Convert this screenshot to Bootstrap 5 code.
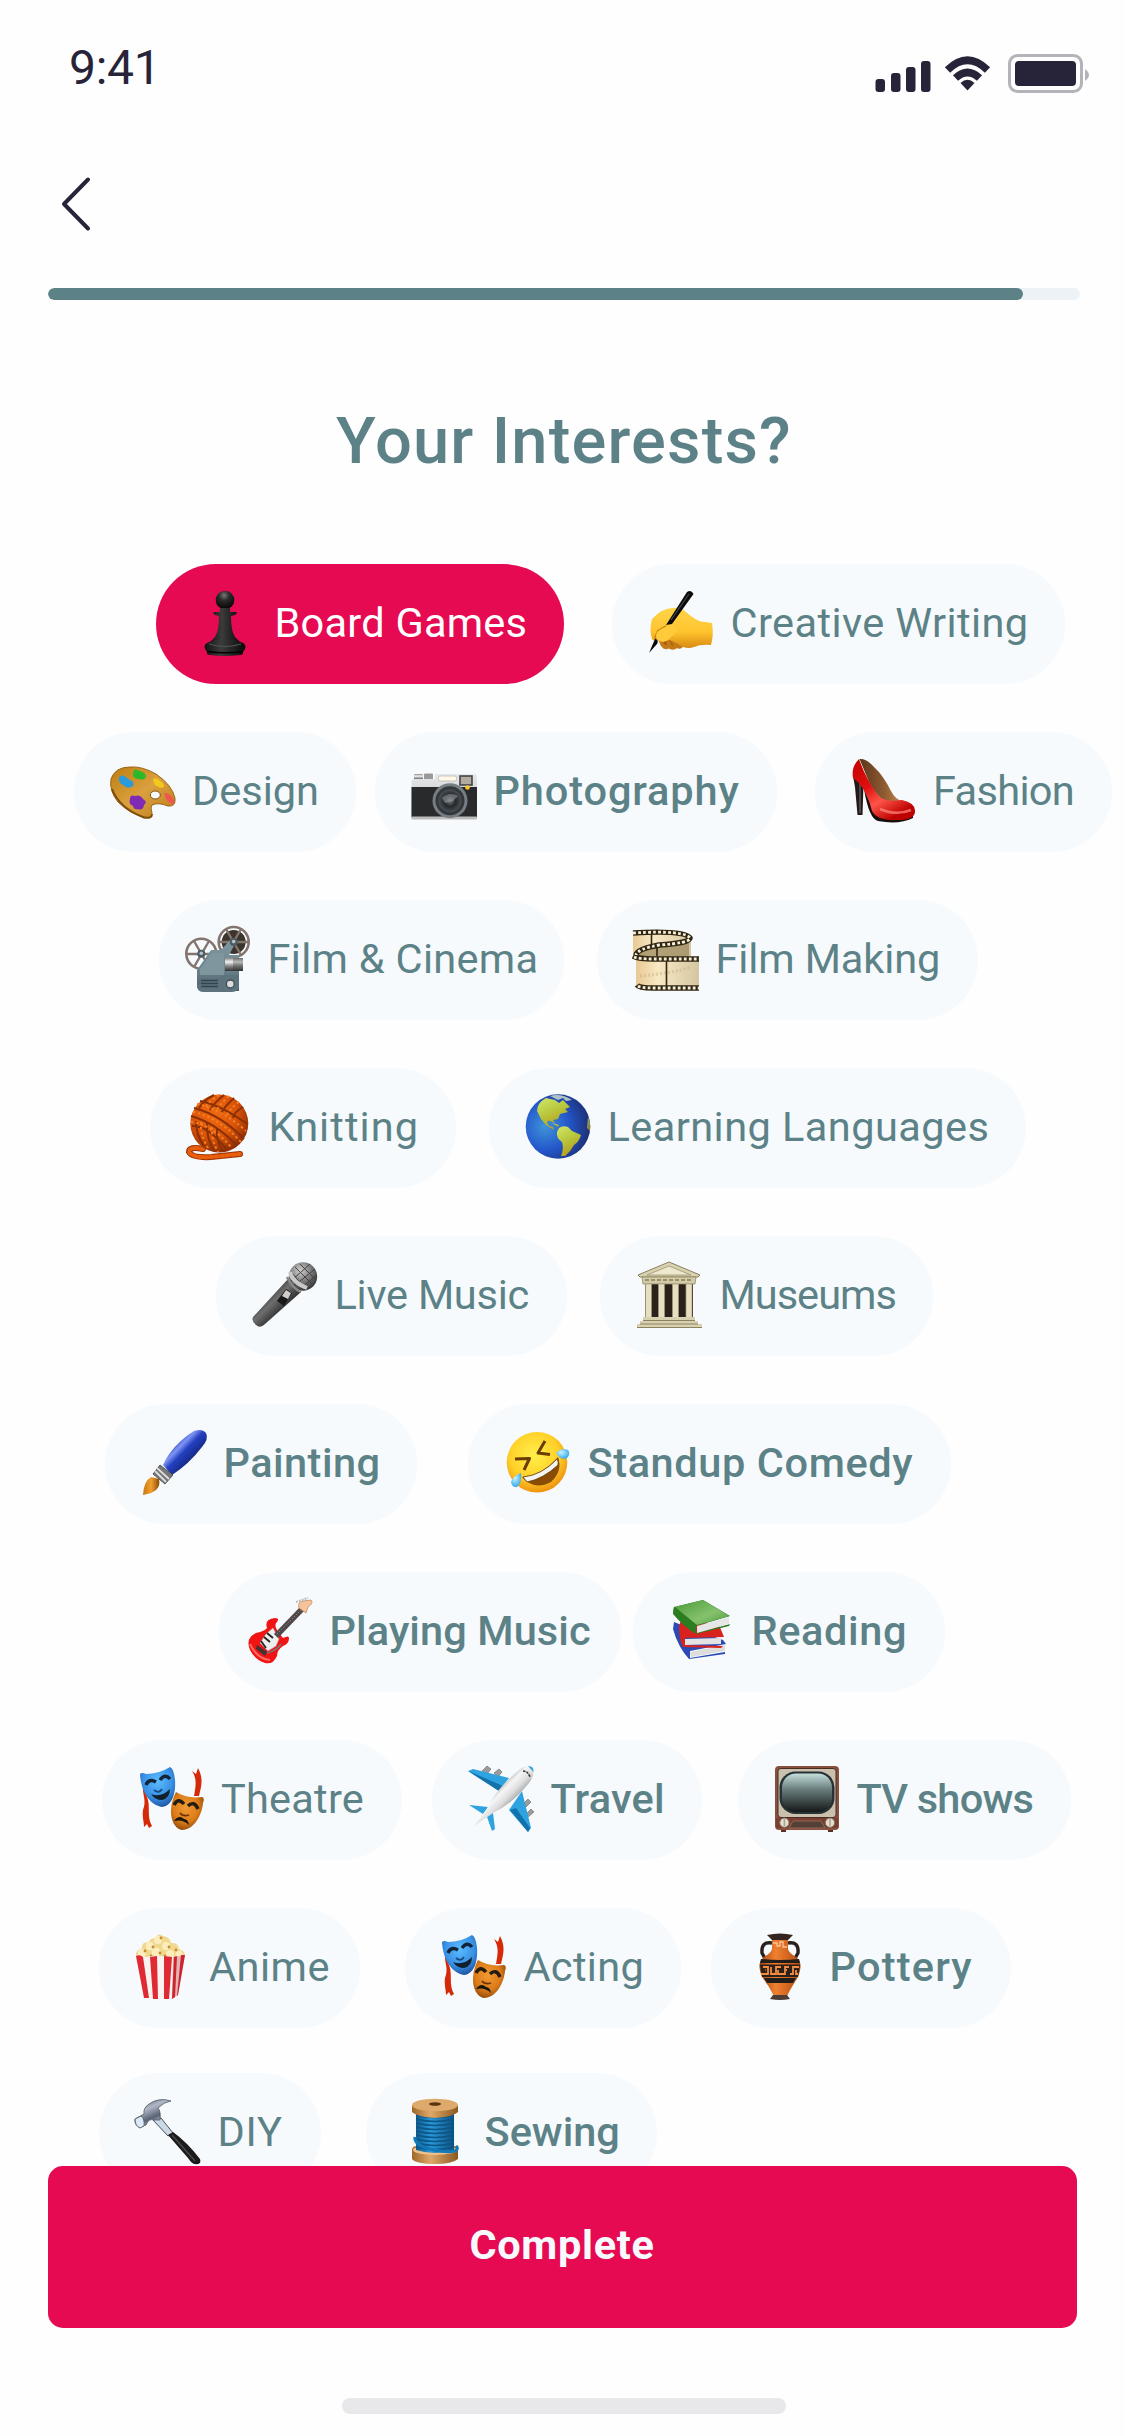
<!DOCTYPE html>
<html lang="en">
<head>
<meta charset="utf-8">
<meta name="viewport" content="width=device-width, initial-scale=1">
<title>Your Interests</title>
<link href="https://cdn.jsdelivr.net/npm/bootstrap@5.3.0/dist/css/bootstrap.min.css" rel="stylesheet">
<style>
:root{--teal:#5c8287;--pink:#e60a52;--ink:#272439;--mist:#f6fafd}
body{font-family:Roboto,"Liberation Sans",sans-serif;color:var(--teal);background:#fefefe}
.screen{width:1125px;height:2436px}
.status{height:132px;padding:42px 35px 0 69px;color:var(--ink)}
.clock{font-size:48px;line-height:52px;letter-spacing:-.3px}
.status-icons{margin-top:8px}
.topbar{height:156px;padding:43px 0 0 59px}
.steps{height:12px;margin:0 45px 0 48px;border-radius:6px;background:#ecf2f6}
.steps .progress-bar{background:var(--teal);border-radius:6px}
.heading{font-size:65px;line-height:78px;font-weight:500;letter-spacing:1.17px;margin:102px 0 84px;padding-left:3px}
.interests{height:1602px;overflow:hidden}
.chip-row{height:120px;margin-bottom:48px}
.chip-row:nth-child(9){margin-bottom:45px}
.chip{height:120px;width:var(--w);margin-left:var(--m);padding:0 0 0 var(--p,36px);border:0;border-radius:60px;background:var(--mist);color:var(--teal);font-size:41.5px;line-height:50px;letter-spacing:var(--s,0);white-space:nowrap;flex:none}
.chip svg{width:66px;height:66px;flex:none;overflow:visible;margin-right:16.5px}
.chip span{padding-bottom:3px}
.chip.picked{background:var(--pink);color:#fff}
.chip.medium{font-weight:500}
.chip-board{--w:408px;--m:156px;--s:.24px}
.chip-writing{--w:453px;--m:48px;--s:.41px}
.chip-design{--w:282px;--m:73.5px}
.chip-photo{--w:402px;--m:19.5px;--s:.88px}
.chip-fashion{--w:297px;--m:37.5px;--s:-.68px}
.chip-cinema{--w:405px;--m:159px;--p:26px;--s:.31px}
.chip-film{--w:381px;--m:33px;--s:-.12px}
.chip-knit{--w:306px;--m:150px;--s:1.06px}
.chip-lang{--w:537px;--m:33px;--s:.44px}
.chip-live{--w:351px;--m:216px;--s:-.24px}
.chip-museum{--w:333px;--m:33px;--p:37px;--s:-.97px}
.chip-paint{--w:312px;--m:105px;--s:.45px}
.chip-comedy{--w:483px;--m:51px;--p:37px;--s:.6px}
.chip-guitar{--w:402px;--m:219px;--p:28px;--s:.1px}
.chip-read{--w:312px;--m:12px;--s:.6px}
.chip-theatre{--w:300px;--m:102px;--p:36.5px;--s:.22px}
.chip-travel{--w:270px;--m:30px;--s:.2px}
.chip-tv{--w:333px;--m:36px;--s:-.8px}
.chip-anime{--w:261px;--m:99px;--p:27.5px;--s:.5px}
.chip-acting{--w:276px;--m:45px;--s:.3px}
.chip-pottery{--w:300px;--m:30px;--s:1.2px}
.chip-diy{--w:222px;--m:99px;--s:.8px}
.chip-sewing{--w:291px;--m:45px}
.complete{height:162px;margin:0 48px;border:0;border-radius:15px;background:var(--pink);color:var(--mist);font-size:41.5px;font-weight:700;letter-spacing:.67px;padding:0 1px 3px 0}
.home-bar{width:444px;height:16px;border-radius:8px;background:#e8e8ea;margin:70px auto 0 342px}
</style>
</head>
<body>
<svg width="0" height="0" class="position-absolute" aria-hidden="true">
<defs>
<linearGradient id="gBlack"><stop offset="0" stop-color="#111"/><stop offset=".4" stop-color="#3c3c3c"/><stop offset="1" stop-color="#080808"/></linearGradient>
<radialGradient id="gBall" cx=".45" cy=".25" r=".7"><stop offset="0" stop-color="#777"/><stop offset=".4" stop-color="#2b2b2b"/><stop offset="1" stop-color="#080808"/></radialGradient>
<linearGradient id="gHand" x2="0" y2="1"><stop offset="0" stop-color="#ffd348"/><stop offset=".6" stop-color="#ffc42e"/><stop offset="1" stop-color="#d98a12"/></linearGradient>
<linearGradient id="gWood" x2="1" y2="1"><stop offset="0" stop-color="#bd7d10"/><stop offset=".5" stop-color="#dba13f"/><stop offset="1" stop-color="#bd7c1b"/></linearGradient>
<linearGradient id="gSilver" x2="0" y2="1"><stop offset="0" stop-color="#e6e8ea"/><stop offset="1" stop-color="#b9bcbf"/></linearGradient>
<radialGradient id="gLens"><stop offset="0" stop-color="#777c80"/><stop offset=".5" stop-color="#25282b"/><stop offset="1" stop-color="#4a5056"/></radialGradient>
<linearGradient id="gRed" x2=".6" y2="1"><stop offset="0" stop-color="#c30000"/><stop offset=".45" stop-color="#e01010"/><stop offset=".7" stop-color="#ff5448"/><stop offset="1" stop-color="#bd0000"/></linearGradient>
<linearGradient id="gInner"><stop offset="0" stop-color="#5c361b"/><stop offset=".6" stop-color="#8f5c32"/><stop offset="1" stop-color="#c58a52"/></linearGradient>
<linearGradient id="gSteel" x2="0" y2="1"><stop offset="0" stop-color="#839aa3"/><stop offset=".6" stop-color="#6a828c"/><stop offset="1" stop-color="#4b5e67"/></linearGradient>
<linearGradient id="gChrome" x2="0" y2="1"><stop offset="0" stop-color="#888"/><stop offset=".3" stop-color="#f4f4f4"/><stop offset=".6" stop-color="#8c8c8c"/><stop offset="1" stop-color="#333"/></linearGradient>
<linearGradient id="gFilm"><stop offset="0" stop-color="#e9c994"/><stop offset=".35" stop-color="#f8e8c4"/><stop offset="1" stop-color="#d5c6a2"/></linearGradient>
<radialGradient id="gYarn" cx=".42" cy=".35" r=".65"><stop offset="0" stop-color="#f06a10"/><stop offset=".6" stop-color="#d95408"/><stop offset="1" stop-color="#8f2e06"/></radialGradient>
<radialGradient id="gSea" cx=".3" cy=".5" r=".72"><stop offset="0" stop-color="#3f94d8"/><stop offset=".5" stop-color="#2458cc"/><stop offset="1" stop-color="#1c2c70"/></radialGradient>
<linearGradient id="gLand" x2=".5" y2="1"><stop offset="0" stop-color="#d2e86a"/><stop offset=".5" stop-color="#b9c83e"/><stop offset="1" stop-color="#b89a1c"/></linearGradient>
<linearGradient id="gMic" x1="0" y1="0" x2="1" y2="1"><stop offset=".2" stop-color="#1c1c1c"/><stop offset=".45" stop-color="#6e6e6e"/><stop offset=".7" stop-color="#1c1c1c"/></linearGradient>
<radialGradient id="gMicHead" cx=".4" cy=".3" r=".75"><stop offset="0" stop-color="#d0d0d0"/><stop offset=".5" stop-color="#7d7d7d"/><stop offset="1" stop-color="#2e2e2e"/></radialGradient>
<linearGradient id="gBlueH" x1="0" y1="0" x2="1" y2="1"><stop offset=".25" stop-color="#2340c8"/><stop offset=".38" stop-color="#8094f4"/><stop offset=".48" stop-color="#2340c0"/><stop offset=".8" stop-color="#0c1656"/></linearGradient>
<linearGradient id="gAmber"><stop offset="0" stop-color="#c8760c"/><stop offset=".5" stop-color="#f0a030"/><stop offset="1" stop-color="#8a4a04"/></linearGradient>
<radialGradient id="gFace" cx=".45" cy=".38" r=".62"><stop offset="0" stop-color="#fff04a"/><stop offset=".65" stop-color="#ffd028"/><stop offset="1" stop-color="#ee9410"/></radialGradient>
<radialGradient id="gTear" cx=".4" cy=".35" r=".7"><stop offset="0" stop-color="#c8f2ff"/><stop offset="1" stop-color="#2aa6ea"/></radialGradient>
<linearGradient id="gGreen" x2="1" y2="1"><stop offset="0" stop-color="#4a9a36"/><stop offset=".6" stop-color="#85c26e"/><stop offset="1" stop-color="#4f9a3c"/></linearGradient>
<radialGradient id="gBlueM" cx=".5" cy=".35" r=".7"><stop offset="0" stop-color="#5cbcff"/><stop offset=".6" stop-color="#3890e4"/><stop offset="1" stop-color="#1c4c96"/></radialGradient>
<radialGradient id="gGoldM" cx=".45" cy=".4" r=".65"><stop offset="0" stop-color="#f09a34"/><stop offset=".6" stop-color="#dd7c18"/><stop offset="1" stop-color="#8a4508"/></radialGradient>
<linearGradient id="gPlane" x1=".25" y1=".25" x2=".7" y2=".7"><stop offset=".2" stop-color="#999"/><stop offset=".45" stop-color="#f6f6f6"/><stop offset=".65" stop-color="#ddd"/><stop offset="1" stop-color="#777"/></linearGradient>
<linearGradient id="gScreen" x2="0" y2="1"><stop offset="0" stop-color="#c4dfdd"/><stop offset=".4" stop-color="#6c7f80"/><stop offset="1" stop-color="#151818"/></linearGradient>
<linearGradient id="gPot"><stop offset="0" stop-color="#a84a12"/><stop offset=".4" stop-color="#f08030"/><stop offset="1" stop-color="#b04a10"/></linearGradient>
<linearGradient id="gHam" x2=".6" y2="1"><stop offset="0" stop-color="#4a5260"/><stop offset=".4" stop-color="#b0b8c8"/><stop offset=".7" stop-color="#596272"/><stop offset="1" stop-color="#d9e6f6"/></linearGradient>
<linearGradient id="gSpool"><stop offset="0" stop-color="#a06828"/><stop offset=".4" stop-color="#e0a868"/><stop offset="1" stop-color="#8a5820"/></linearGradient>
<linearGradient id="gThread"><stop offset="0" stop-color="#0e5a8c"/><stop offset=".4" stop-color="#2a98d8"/><stop offset="1" stop-color="#0c5080"/></linearGradient>
<g id="masks">
<path d="M4 18C3 28 8 33 4 43C3 50 5 54 5 60L8 57L10 61L13 59C8 50 11 42 9 33Z" fill="#d42a08"/>
<path d="M53 4L57 7L59 1C65 12 62 20 60 29L55 29C57 18 58 12 53 4Z" fill="#d42a08"/>
<path d="M1 7Q3 5 7 7Q20 7 31 0Q35 2 36 13C37 27 33 39 23 40C11 38 2 25 1 7Z" fill="url(#gBlueM)"/>
<path d="M7 18Q10 11 17 15M21 13Q26 6 31 12" fill="none" stroke="#122438" stroke-width="3.4"/>
<path d="M15 23Q20 27 23 22" fill="none" stroke="#164a80" stroke-width="1.8"/>
<path d="M12 27Q22 31 31 22Q31 31 23 33Q16 33 12 27Z" fill="#10202c"/>
<path d="M37 25Q48 32 63 30Q66 31 64 36C63 48 55 63 43 63C32 61 28 42 37 25Z" fill="url(#gGoldM)"/>
<path d="M35 38Q39 30 45 37M49 39Q55 33 59 42" fill="none" stroke="#241c10" stroke-width="3.4"/>
<path d="M41 46Q44 50 50 48" fill="none" stroke="#6c3404" stroke-width="1.8"/>
<path d="M35 54Q40 47 45 52Q49 52 50 58Q44 52 35 54Z" fill="#16160e"/>
</g>
</defs>
</svg>

<main class="screen d-flex flex-column overflow-hidden">
  <header class="status d-flex justify-content-between">
    <span class="clock">9:41</span>
    <svg class="status-icons" width="216" height="48" viewBox="874 50 216 48" aria-hidden="true">
      <g fill="#272439"><rect x="875.5" y="79" width="9.5" height="13" rx="3"/><rect x="891" y="73" width="9.500" height="19" rx="3"/><rect x="906" y="67" width="9.500" height="25" rx="3"/><rect x="921" y="61" width="9.500" height="31" rx="3"/>
      <path d="M967.500 90.500L960.500 83Q967.500 76.500 974.500 83Z"/></g>
      <path d="M947.500 70Q967.500 50.500 987.500 70M955.500 78Q967.500 67 979.500 78" fill="none" stroke="#272439" stroke-width="7.5"/>
      <rect x="1009.500" y="55.500" width="72" height="36" rx="8" fill="none" stroke="#b4b3ba" stroke-width="3"/>
      <rect x="1015" y="61" width="61" height="25" rx="4" fill="#272439"/><path d="M1085 69Q1093 75 1085 81Z" fill="#b4b3ba"/>
    </svg>
  </header>
  <nav class="topbar">
    <a href="#" aria-label="Back" class="d-inline-block lh-1"><svg width="34" height="58" viewBox="0 0 34 58"><path d="M29 4.500L5 29L29 53.500" fill="none" stroke="#272439" stroke-width="4" stroke-linecap="round" stroke-linejoin="round"/></svg></a>
  </nav>
  <div class="progress steps flex-shrink-0"><div class="progress-bar" role="progressbar" style="width:94.5%" aria-valuenow="94" aria-valuemin="0" aria-valuemax="100"></div></div>
  <h1 class="heading text-center">Your Interests?</h1>

  <section class="interests flex-shrink-0">
    <div class="chip-row d-flex">
      <button class="chip chip-board picked d-flex align-items-center"><svg viewBox="0 0 66 66"><circle cx="33" cy="9" r="9.300" fill="url(#gBall)"/><path d="M28 17H38V21H44Q46 22 43 24L39 25Q39 40 43 46L49 52H17L23 46Q27 40 27 25L23 24Q20 22 22 21H28Z" fill="url(#gBlack)"/><path d="M17 51Q33 45 49 51Q55 53 53 58L51 61Q52 64 48 64Q33 66 18 64Q14 64 15 61L13 58Q11 53 17 51Z" fill="url(#gBlack)"/><path d="M17 53Q33 58 49 53" fill="none" stroke="#555"/><path d="M15 60.500Q33 63 51 60.500" fill="none" stroke="#000" stroke-width="1.500"/></svg><span>Board Games</span></button>
      <button class="chip chip-writing d-flex align-items-center"><svg viewBox="0 0 66 66"><path d="M12 45Q14 56 19 57Q24 59 30 55L34 50L20 40Z" fill="#a55b08"/><path d="M13 50Q15 57 19 56M20 50Q22 59 27 56M25 50Q30 59 34 54" fill="none" stroke="#c47a18" stroke-width="4" stroke-linecap="round"/><path d="M4 48Q1 39 4 28Q14 17 25 17Q32 16 38 21Q49 31 57 31L64 32Q66 44 63 54Q53 53 46 56Q38 59 30 53Q25 50 21 49Q12 53 8 48Q6 51 4 48Z" fill="url(#gHand)"/><path d="M18 35L10 40Q8 44 7 48" fill="none" stroke="#c98410" stroke-width="2"/><path d="M39 1Q43 -2 45.500 3L24 33L18 34Z" fill="#0a0a0a"/><path d="M7 48L1 62L9 53Q11 50 8 48Z" fill="#0a0a0a"/><path d="M41 3L23 29" stroke="#4a4a4a" stroke-width="1.200"/><path d="M9 48Q5 42 15 37Q20 34 25 34L30 40L22 47Q15 54 9 48Z" fill="#ffcb3a"/></svg><span>Creative Writing</span></button>
    </div>
    <div class="chip-row d-flex">
      <button class="chip chip-design d-flex align-items-center"><svg viewBox="0 0 66 66"><path d="M20 8Q32 7 46 15Q62 26 65 39Q66 48 58 47Q48 43 42 46Q40 48 42 54Q42 60 34 58Q20 55 8 43Q-1 32 1 20Q5 8 20 8Z" fill="url(#gWood)" stroke="#9a6414"/><path d="M2 30Q9 49 34 58.500Q42 60 42 55" fill="none" stroke="#7e4c0a" stroke-width="2"/><ellipse cx="45.300" cy="36" rx="5" ry="4" fill="#f8fbfd" stroke="#80500c"/><path d="M9 18Q13 14 18 20Q25 22 23 27Q18 31 13 26Q8 24 9 18Z" fill="#2b9ad8"/><path d="M23 15Q24 8 29 12Q36 13 36 18Q34 22 29 20Q23 20 23 15Z" fill="#2db82a"/><path d="M43 20Q47 18 50 22Q55 25 54 28Q50 30 47 27Q44 27 43 20Z" fill="#f3c91c"/><path d="M54 34Q59 34 62 38Q66 44 63 45Q57 45 54 34Z" fill="#f0574e"/><path d="M20 40Q20 35 25 37Q30 35 33 40Q38 43 34 46Q33 52 28 50Q24 51 23 47Q18 45 20 40Z" fill="#7f2bb4"/></svg><span>Design</span></button>
      <button class="chip chip-photo medium d-flex align-items-center"><svg viewBox="0 0 66 66"><rect x="3" y="15" width="9" height="7" rx="1" fill="url(#gChrome)"/><rect x="13" y="14.500" width="9" height="8" rx="1" fill="#999"/><path d="M.500 22Q1 20 4 20H24V15H64Q66 15 66 18V60H.500Z" fill="url(#gSilver)"/><rect x=".5" y="28" width="65.500" height="30" fill="#282a2c"/><rect x=".5" y="57.500" width="65.500" height="3" rx="1" fill="#bbb"/><rect x="27.500" y="17" width="18" height="5" rx="1.500" fill="#fff8e6" stroke="#aaa" stroke-width=".6"/><rect x="49" y="17" width="12" height="9" fill="#b3aaa2" stroke="#444" stroke-width="1.600"/><circle cx="39" cy="41.700" r="17.500" fill="#767d83"/><circle cx="39" cy="41.700" r="14.500" fill="#33383c"/><circle cx="39" cy="41.700" r="11.500" fill="url(#gLens)"/><path d="M31 39Q38 32 47 37L42 42L34 44Z" fill="#999fa3" opacity=".55"/><circle cx="56.500" cy="28.500" r="2.300" fill="#ffc526"/></svg><span>Photography</span></button>
      <button class="chip chip-fashion d-flex align-items-center"><svg viewBox="0 0 66 66"><path d="M2 17L4 28L6.500 56H11.500L12.500 25Z" fill="#241818"/><path d="M9 22L9 54" stroke="#777" stroke-width="1"/><path d="M13 30Q18 60 27 62Q48 66 62 59V55H24Z" fill="#1b0c0c"/><path d="M8.500 0Q15 -1 23 8Q32 16 40 32Q44 40 51 42L37 45Q25 37 18 23Z" fill="url(#gInner)"/><path d="M8 0Q15 20 26 35Q32 44 51 41Q65 44 64 53Q63 61 47 61Q26 62 21 52Q17 35 8 24L2 19Q0 8 8 0Z" fill="url(#gRed)"/><path d="M29 50Q45 57 60 51" fill="none" stroke="#ff8a80" stroke-width="2.500" opacity=".7"/></svg><span>Fashion</span></button>
    </div>
    <div class="chip-row d-flex">
      <button class="chip chip-cinema d-flex align-items-center"><svg viewBox="0 0 66 66"><circle cx="48.700" cy="15" r="12" fill="#3b352d"/><g fill="none" stroke="#83756e"><circle cx="16.300" cy="26.700" r="15" stroke-width="2.600"/><circle cx="48.700" cy="15" r="15" stroke-width="2.600"/><path d="M1 27H31M9 14L24 40M24 14L9 40M34 15H64M41 2L56 28M56 2L41 28" stroke-width="2.400"/></g><path d="M12 43L26 23H36L46 12L51 15L44 28H54V64H18Q12 64 12 58Z" fill="url(#gSteel)"/><path d="M40 48H54V58Q54 65 47 65H18Q12 65 12 58" fill="#5c727c"/><path d="M15 42L27 26H39V48H15Z" fill="#7f969f"/><rect x="40" y="31" width="18" height="13" fill="url(#gChrome)"/><rect x="48" y="31" width="10" height="13" fill="#333" opacity=".3"/><g fill="#4c5c65"><circle cx="16.300" cy="26.700" r="4"/><circle cx="48.700" cy="15" r="4"/></g><g fill="#b8c4c9"><circle cx="16.300" cy="26.200" r="1.800"/><circle cx="48.700" cy="14.600" r="1.800"/></g><path d="M16 53.500H33M16 56.500H33M16 59.500H33" stroke="#33444d" stroke-width="1.400"/><circle cx="45.300" cy="57" r="4" fill="#ddd" stroke="#435159" stroke-width="1.500"/></svg><span>Film &amp; Cinema</span></button>
      <button class="chip chip-film d-flex align-items-center"><svg viewBox="0 0 66 66"><path d="M0 6Q48 2 58 12V46Q40 55 5 50V25L0 29Z" fill="url(#gFilm)"/><path d="M4 26Q24 18 56 16V30H4Z" fill="#9c895f" opacity=".75"/><path d="M3 30H66V62H18Q4 62 3 57Z" fill="url(#gFilm)"/><path d="M7 49Q40 46 58 40" fill="none" stroke="#c8b27e" stroke-width="3" stroke-dasharray="2 2" opacity=".5"/><g fill="none" stroke="#2f2511" stroke-width="5.500"><path d="M0 6Q52 3 57 11Q57 16 26 18Q4 22 3 28"/><path d="M0 29Q6 32 20 32H66"/><path d="M4 58Q6 61 20 61H66"/></g><g fill="none" stroke="#f7efdc" stroke-width="2.800" stroke-dasharray="2.800 2.200"><path d="M0 6Q52 3 57 11Q57 16 26 18Q4 22 3 28"/><path d="M1 30Q6 32 20 32H66"/><path d="M5 59Q8 61 20 61H66"/></g><path d="M18.500 8V19M24 20V29M33.500 34V59" stroke="#2f2511" stroke-width="1.600"/></svg><span>Film Making</span></button>
    </div>
    <div class="chip-row d-flex">
      <button class="chip chip-knit d-flex align-items-center"><svg viewBox="0 0 66 66"><path d="M17 54Q3 51 3 57Q6 63 25 62L54 59" fill="none" stroke="#9e3507" stroke-width="6" stroke-linecap="round"/><path d="M17 54Q3 51 3 57Q6 63 25 62L54 59" fill="none" stroke="#e85e0c" stroke-width="4" stroke-linecap="round" stroke-dasharray="3 2.500"/><circle cx="33.300" cy="28.500" r="29" fill="url(#gYarn)"/><g fill="none" stroke="#8a3006" stroke-width="2"><path d="M8 13Q35 20 58 44M5 21Q30 28 51 51M14 6Q35 10 61 29M6 31Q22 30 42 56M28 0Q18 5 13 13M38 0Q28 8 24 15M48 3Q37 13 35 19M57 12Q48 17 47 23M10 26Q10 40 18 51M21 28Q20 42 28 56M31 34Q30 46 37 56"/></g><g fill="none" stroke="#f57d22" stroke-width="2" stroke-dasharray="2.500 2.500"><path d="M7 17Q32 22 55 47M11 9Q37 15 60 36M33 0Q23 6 18 14M43 1Q33 10 30 17M53 7Q43 14 41 21M5 27Q24 28 46 53M15 27Q14 40 22 53M26 32Q25 44 32 57"/></g></svg><span>Knitting</span></button>
      <button class="chip chip-lang d-flex align-items-center"><svg viewBox="0 0 66 66"><circle cx="33" cy="31.500" r="32.300" fill="url(#gSea)"/><g fill="url(#gLand)"><path d="M12 16Q12 8 21 3L30 5L34 8L38 5L45 12L40 14L43 17L35 19L33 24L28 25L30 28L25 26Q20 25 24 31L28 32L29 35L21 30L16 24Z"/><path d="M34 33Q38 30 43 32L47 36L56 40Q54 47 49 50Q46 56 40 61L36 61Q39 54 37 47Q31 43 32 37Z"/><path d="M63 22Q66 28 65 36L62 33Z" opacity=".7"/><path d="M27 28L34 30L33 32Z"/></g><path d="M25 1Q36 -2 47 5L41 6L38 3L33 5Z" fill="#c9d8cf" opacity=".85"/></svg><span>Learning Languages</span></button>
    </div>
    <div class="chip-row d-flex">
      <button class="chip chip-live d-flex align-items-center"><svg viewBox="0 0 66 66"><path d="M36 16L49 29L13 61Q8 66 4 62Q-1 58 1 54Z" fill="url(#gMic)"/><circle cx="51" cy="13.500" r="14.200" fill="url(#gMicHead)"/><path d="M43 4L60 21M48 1L64 17M39 9L54 26M39 18L58 1M42 23L63 6M48 26L65 12" stroke="#3b3b3b" stroke-width=".9"/><path d="M38 9Q40 19 55 25" fill="none" stroke="#c9c9c9" stroke-width="4"/><path d="M35 14Q40 25 49 29" fill="none" stroke="#888" stroke-width="2.500"/><path d="M34 26L40 30L32 43L25 38Z" fill="#191919"/><path d="M34 27L39 30L36 36L30 33Z" fill="#cfcfcf"/></svg><span>Live Music</span></button>
      <button class="chip chip-museum d-flex align-items-center"><svg viewBox="0 0 66 66"><path d="M8 20H56V54H8Z" fill="#2a211b"/><path d="M32 -1L63 12L61 14H3L1 12Z" fill="#d9d2b0" stroke="#887f5c"/><path d="M32 3L54 12H10Z" fill="#eee8ce" stroke="#9c9370" stroke-width=".8"/><path d="M5 14H59L58 21H6Z" fill="#d3cba6" stroke="#918864" stroke-width=".8"/><path d="M8 17H56" stroke="#9a916e" stroke-width="1.800" stroke-dasharray="4 2"/><g fill="#e6dfc1" stroke="#a1987a" stroke-width=".7"><rect x="8.500" y="21" width="6" height="34"/><rect x="21.500" y="21" width="6" height="34"/><rect x="35.500" y="21" width="6" height="34"/><rect x="49" y="21" width="6" height="34"/></g><path d="M6 54H58V58H61V61H65V65H0V61H3V58H6Z" fill="#d8d1af"/><path d="M6 57.500H58M3 61H61M0 64.500H65" stroke="#8b8260" stroke-width="1.200"/></svg><span>Museums</span></button>
    </div>
    <div class="chip-row d-flex">
      <button class="chip chip-paint medium d-flex align-items-center"><svg viewBox="0 0 66 66"><path d="M22 34Q31 14 53 0Q61 -3 65 2Q68 8 61 16Q48 33 31 44Z" fill="url(#gBlueH)"/><path d="M19 34L32 44L24 53L12 43Z" fill="#777" stroke="#444" stroke-width=".8"/><path d="M16 37L28 48M14 40L25 51" stroke="#ddd" stroke-width="1.800"/><path d="M10 46L18 48Q21 61 2 64Q3 50 10 46Z" fill="url(#gAmber)"/></svg><span>Painting</span></button>
      <button class="chip chip-comedy medium d-flex align-items-center"><svg viewBox="0 0 66 66"><circle cx="32" cy="31.300" r="30.300" fill="url(#gFace)"/><path d="M40 10L33 22L45 23.500M10 28L24.500 27.500L19 39" fill="none" stroke="#6b3c04" stroke-width="3" stroke-linejoin="round"/><path d="M17 46Q37 45 53 26Q58 40 46 51Q29 60 17 46Z" fill="#8a4c05"/><path d="M18 46Q37 44 52 28Q54 31 53 34Q38 48 22 51Z" fill="#f3f3f0" stroke="#61380a" stroke-width=".8"/><path d="M51 22Q57 16 63 19Q66 23 62 27Q56 30 51 22Z" fill="url(#gTear)"/><path d="M16 42Q17 52 12 56Q7 57 6 51Q8 45 16 42Z" fill="url(#gTear)"/></svg><span>Standup Comedy</span></button>
    </div>
    <div class="chip-row d-flex">
      <button class="chip chip-guitar medium d-flex align-items-center"><svg viewBox="0 0 66 66"><path d="M20 29Q17 20 28 19Q33 19 30 23Q26 26 32 34L36 39Q42 36 42 39Q42 45 36 47Q30 51 30 57Q26 66 18 64Q8 61 3 51Q-2 39 9 34Q18 32 20 29Z" fill="#f01414"/><path d="M3 45Q10 60 23 61" fill="none" stroke="#ff6b60" stroke-width="2"/><path d="M19 35L26 29L32 40L29 47L21 52L13 44Z" fill="#eee" stroke="#aaa" stroke-width=".6"/><path d="M17 38L23 43M20 34L26 39M14 42L19 49" stroke="#222" stroke-width="1.800"/><path d="M10 46L20 53L18 57L9 50Z" fill="#423434"/><path d="M20 54Q29 52 34 45" fill="none" stroke="#777" stroke-width="1.500"/><path d="M27 35L53 8L57 12L31 39Z" fill="#51484a"/><path d="M28 37L55 10" stroke="#a99" stroke-width="1" stroke-dasharray="1 2"/><path d="M52 9Q50 3 56 2L64 1Q67 4 61 8L59 14Z" fill="#f5c29a" stroke="#c28b61" stroke-width=".8"/><path d="M49 3L61 -1" stroke="#bbb" stroke-width="2" stroke-dasharray="2 1"/></svg><span>Playing Music</span></button>
      <button class="chip chip-read medium d-flex align-items-center"><svg viewBox="0 0 66 66"><path d="M5 23L15 27L54 41L57 45L21 52V59L56 53V55L20 60Q9 48 4 30Z" fill="#2c4ab4"/><path d="M21 53L56 46V52L22 58Z" fill="#ddd"/><path d="M12 21L50 26L55 38L16 39V46L54 47L52 49L14 48Q10 40 10 27Z" fill="#d7221e"/><path d="M16 40L52 39V45L16 46Z" fill="#e3e3e3"/><path d="M5 8L34 1L61 17L27 27V34L61 25L60 27L27 35Q15 28 4 15Q4 10 5 8Z" fill="#2c7d22"/><path d="M6 8L34 1L60 17L28 26Z" fill="url(#gGreen)"/><path d="M28 27L60 18V25L28 34Z" fill="#e6e6e6"/></svg><span>Reading</span></button>
    </div>
    <div class="chip-row d-flex">
      <button class="chip chip-theatre d-flex align-items-center"><svg viewBox="0 0 66 66"><use href="#masks"/></svg><span>Theatre</span></button>
      <button class="chip chip-travel medium d-flex align-items-center"><svg viewBox="0 0 66 66"><g fill="#9b9b9b" stroke="#666" stroke-width=".6"><path d="M14 4L19 -1L23 2L19 7ZM26 6L31 2L34 5L30 10Z"/><path d="M55 37L60 32L63 35L58 40ZM58 47L63 42L66 45L60 50Z"/></g><path d="M0 4L5 2L41 11L31 24ZM54 24L63 61L60 65L41 43ZM1 38L20 40L15 47ZM18 47L25 46L27 62L24 64Z" fill="#2ea3e0"/><path d="M0 4L5 6L35 19L31 24ZM42 43L48 41L62 61L60 65Z" fill="#1272ac"/><path d="M5 60L19 42Q26 24 51 3Q58 -3 65 0Q67 8 61 16Q43 38 25 46Z" fill="url(#gPlane)"/><path d="M60 -1Q66 -1 65.500 5Z" fill="#2ea3e0"/><path d="M55 4Q60 4 62 10" fill="none" stroke="#333" stroke-width="1.600" stroke-dasharray="2.500 1"/></svg><span>Travel</span></button>
      <button class="chip chip-tv medium d-flex align-items-center"><svg viewBox="0 0 66 66"><rect x="7" y="61" width="5" height="4" fill="#5b2f24"/><rect x="54" y="61" width="5" height="4" fill="#5b2f24"/><rect x="1" y="-1" width="64" height="64" rx="4" fill="#87503f"/><path d="M2 51H64V61H2Z" fill="#783f2e"/><rect x="4" y="1.500" width="58" height="49" rx="3" fill="#c9c0ad" stroke="#4b2b22"/><rect x="5.500" y="4.500" width="55" height="42.500" rx="16" fill="#263234"/><rect x="8" y="6.500" width="50" height="38.500" rx="14" fill="url(#gScreen)"/><path d="M19 54H47L51 61H15Z" fill="#544036" stroke="#a0705f" stroke-width=".8"/><g fill="#e5dfcf" stroke="#84786a"><circle cx="10.400" cy="55.700" r="4.600"/><circle cx="56" cy="55.700" r="4.600"/></g><path d="M10.400 52V59M56 52V59" stroke="#aaa08c" stroke-width="1.500"/></svg><span>TV shows</span></button>
    </div>
    <div class="chip-row d-flex">
      <button class="chip chip-anime d-flex align-items-center"><svg viewBox="0 0 66 66"><path d="M9 23Q8 15 15 13Q14 7 22 7Q23 3 29 3Q31 -3 36 1Q43 2 44 8Q51 7 52 14Q60 16 57 24Z" fill="#f0d88e"/><g fill="#fbeebc"><circle cx="15" cy="18" r="4"/><circle cx="23" cy="11" r="4"/><circle cx="31" cy="5" r="4"/><circle cx="29" cy="17" r="4.500"/><circle cx="39" cy="11" r="4"/><circle cx="43" cy="19" r="4"/><circle cx="52" cy="19" r="3.500"/></g><g fill="#c58c32"><circle cx="18" cy="16" r="1.400"/><circle cx="26" cy="12" r="1.400"/><circle cx="34" cy="3" r="1.400"/><circle cx="33" cy="18" r="1.400"/><circle cx="42" cy="12" r="1.400"/><circle cx="49" cy="15" r="1.400"/><circle cx="38" cy="21" r="1.400"/><circle cx="24" cy="21" r="1.400"/></g><path d="M9 21Q14 19 18 22Q30 20 46 22L58 20L51 60L45 64L17 63Z" fill="#f8f2f0"/><path d="M9 21Q13 19 16 22L22 63H17ZM23 22L30 21L31 64H26ZM37 21L45 22L42 64H37ZM47 22L50 21L48 62L45 64ZM54 20L58 20L51 60L50 61Z" fill="#df2a34"/><path d="M46 22L58 20L51 60L45 64Z" fill="#a41622" opacity=".28"/></svg><span>Anime</span></button>
      <button class="chip chip-acting d-flex align-items-center"><svg viewBox="0 0 66 66"><use href="#masks"/></svg><span>Acting</span></button>
      <button class="chip chip-pottery medium d-flex align-items-center"><svg viewBox="0 0 66 66"><path d="M25 8Q14 6 15 18L19 25M41 8Q52 6 51 18L47 25" fill="none" stroke="#2a211d" stroke-width="3.400"/><path d="M25 3H41V14Q42 18 49 22Q57 28 51 42Q44 53 40 61H27Q22 51 15 42Q9 28 17 22Q24 18 25 14Z" fill="url(#gPot)"/><path d="M20 0Q33 -3 46 0L41 5H25Z" fill="#35251f"/><path d="M14 24Q33 26 52 24L53 28H13ZM17 43H49L46 48H20Z" fill="#211d1b"/><path d="M13 29.500H53L51 42H15Z" fill="#2b211b"/><path d="M14 39H21V32H16M18 35H18.500M24 32V39H29V32H34M31 35V39H38V32H42M39 35H40M43 39H46V32H52M49 35V39H51" fill="none" stroke="#f58b3f" stroke-width="1.800"/><path d="M26 8H30V11H33V7H36V12H40" fill="none" stroke="#f9c398" stroke-width="1.300"/><path d="M26 60H40L43 64Q33 66 23 64Z" fill="#4e3c36"/></svg><span>Pottery</span></button>
    </div>
    <div class="chip-row d-flex">
      <button class="chip chip-diy d-flex align-items-center"><svg viewBox="0 0 66 66"><path d="M18 20L26 18L38 33L33 36Z" fill="#cbd8e6" stroke="#4b4f5a"/><path d="M33 35L38 32Q52 42 65 59Q67 65 60 64Q57 64 53 58Z" fill="#1b1b1c"/><path d="M37 35L60 61" stroke="#4a4a4a" stroke-width="1.500"/><path d="M36 1Q24 -3 14 4Q8 8 9 14L0 19Q-1 25 5 27L11 25Q14 18 19 20L25 20Q26 11 23 8Q29 2 36 1Z" fill="url(#gHam)" stroke="#444b57" stroke-width=".7"/><path d="M0 19L6 16Q10 19 9 26L5 28Q0 26 0 19Z" fill="#dbe9fa" stroke="#666"/></svg><span>DIY</span></button>
      <button class="chip chip-sewing medium d-flex align-items-center"><svg viewBox="0 0 66 66"><path d="M10 50Q10 46 15 46H51Q56 46 56 50V59Q50 64 33 64Q14 64 10 59Z" fill="url(#gSpool)"/><ellipse cx="33" cy="50" rx="22" ry="5" fill="#efc18c"/><path d="M14 12H52V50Q33 56 14 50Z" fill="url(#gThread)"/><path d="M14 19Q33 24 52 19M14 23Q33 28 52 23M14 27Q33 32 52 27M14 31Q33 36 52 31M14 35Q33 40 52 35M14 39Q33 44 52 39M14 43Q33 48 52 43M14 47Q33 52 52 47M14 15Q33 20 52 15" fill="none" stroke="#0b5688" stroke-width="1.400"/><path d="M13 37Q12 45 28 49Q44 53 53 51Q57 49 54 46" fill="none" stroke="#1279b8" stroke-width="3.200"/><path d="M10 5H56V12Q51 17 33 18Q15 17 10 12Z" fill="url(#gSpool)"/><ellipse cx="33" cy="5" rx="23" ry="6.300" fill="#deaa6c"/><ellipse cx="33" cy="4" rx="6" ry="1.800" fill="#59350f"/></svg><span>Sewing</span></button>
    </div>
  </section>

  <button class="complete btn flex-shrink-0">Complete</button>
  <div class="home-bar flex-shrink-0"></div>
</main>
<script src="https://cdn.jsdelivr.net/npm/bootstrap@5.3.0/dist/js/bootstrap.bundle.min.js"></script>
</body>
</html>
